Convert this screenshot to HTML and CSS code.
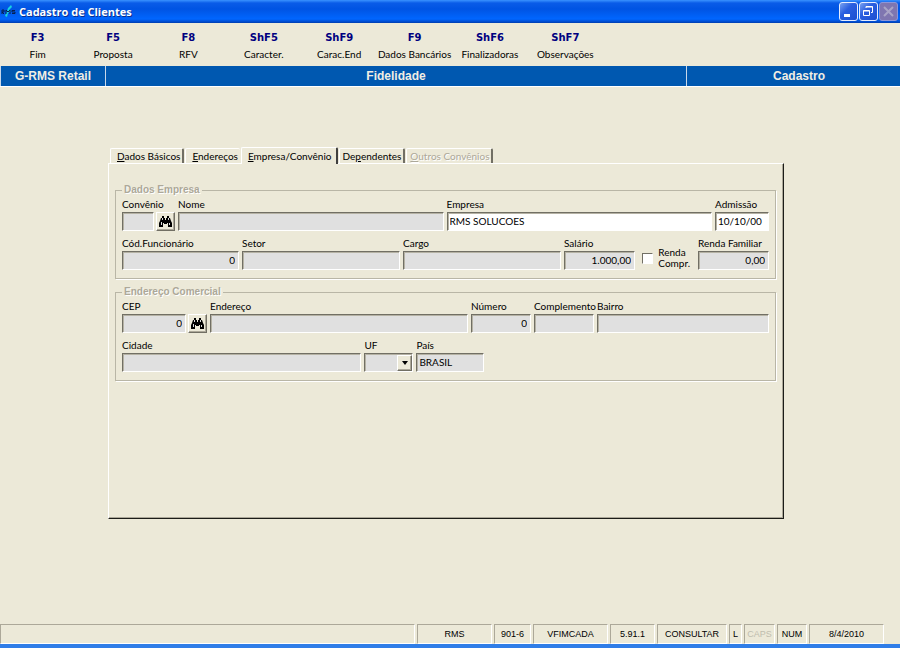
FILE: index.html
```html
<!DOCTYPE html>
<html lang="pt-BR">
<head>
    <meta charset="utf-8">
    <title>Cadastro de Clientes</title>
    <link rel="stylesheet" href="styles.css">
</head>
<body>
    <header class="titlebar">
        <svg class="app-icon" width="16" height="16" viewBox="0 0 16 16">
            <path d="M4 12 L6 7 L7 4 L10 1 L11 3 L8 6 L10 7 L7 9 L6 13 Z" fill="#19d3e0"/>
            <path d="M1 10V6h2v2H1l2 2M5 10V6l2 2 2-2v4M14 6.500h-3v1.500h3v1.500h-3" fill="none" stroke="#062050"/>
        </svg>
        <h1>Cadastro de Clientes</h1>
        <div class="window-buttons">
            <button type="button" aria-label="Minimizar">
                <svg width="19" height="19" viewBox="0 0 19 19"><path d="M5 12h6v3H5z" fill="#fff"/></svg>
            </button>
            <button type="button" aria-label="Restaurar">
                <svg width="19" height="19" viewBox="0 0 19 19"><path d="M7 6V4.500h6.500v6H12M7 5h6.500M4.500 8.500h6v5h-6zM4.500 9h6" fill="none" stroke="#fff"/></svg>
            </button>
            <button type="button" aria-label="Fechar" disabled>
                <svg width="19" height="19" viewBox="0 0 19 19"><path d="M5 5l9 9M14 5l-9 9" stroke="#a9a4c6" stroke-width="2"/></svg>
            </button>
        </div>
    </header>

    <nav class="toolbar">
        <button type="button"><b>F3</b>Fim</button>
        <button type="button"><b>F5</b>Proposta</button>
        <button type="button"><b>F8</b>RFV</button>
        <button type="button"><b>ShF5</b>Caracter.</button>
        <button type="button"><b>ShF9</b>Carac.End</button>
        <button type="button"><b>F9</b>Dados Bancários</button>
        <button type="button"><b>ShF6</b>Finalizadoras</button>
        <button type="button"><b>ShF7</b>Observações</button>
    </nav>

    <div class="banner">
        <span>G-RMS Retail</span>
        <span>Fidelidade</span>
        <span>Cadastro</span>
    </div>

    <main>
        <div class="tabs" role="tablist">
            <button type="button" role="tab"><u>D</u>ados Básicos</button>
            <button type="button" role="tab" class="before-active"><u>E</u>ndereços</button>
            <button type="button" role="tab" class="active" aria-selected="true"><u>E</u>mpresa/Convênio</button>
            <button type="button" role="tab">De<u>p</u>endentes</button>
            <button type="button" role="tab" disabled><u>O</u>utros Convênios</button>
        </div>

        <form class="panel">
            <fieldset>
                <legend>Dados Empresa</legend>
                <div class="row row-convenio">
                    <div class="field">
                        <label for="convenio">Convênio</label>
                        <div class="lookup">
                            <input id="convenio" type="text" readonly>
                            <button type="button" aria-label="Buscar convênio">
                                <svg width="15" height="15" viewBox="0 0 15 15"><path d="M4 2h2v2h1v2h1V4h1V2h2v2h1l1 3 1 2v4h-4V9H9v1H6V9H5v4H1V9l1-2 1-3h1z" fill="#000"/><path d="M4.500 4v2M3.500 8v3M10.500 4v2M11.500 9v2" stroke="#ddd"/></svg>
                            </button>
                        </div>
                    </div>
                    <div class="field">
                        <label for="nome">Nome</label>
                        <input id="nome" type="text" readonly>
                    </div>
                    <div class="field">
                        <label for="empresa">Empresa</label>
                        <input id="empresa" type="text" value="RMS SOLUCOES">
                    </div>
                    <div class="field">
                        <label for="admissao">Admissão</label>
                        <input id="admissao" type="text" value="10/10/00">
                    </div>
                </div>
                <div class="row row-funcionario">
                    <div class="field">
                        <label for="funcionario">Cód.Funcionário</label>
                        <input id="funcionario" class="number" type="text" value="0" readonly>
                    </div>
                    <div class="field">
                        <label for="setor">Setor</label>
                        <input id="setor" type="text" readonly>
                    </div>
                    <div class="field">
                        <label for="cargo">Cargo</label>
                        <input id="cargo" type="text" readonly>
                    </div>
                    <div class="field">
                        <label for="salario">Salário</label>
                        <input id="salario" class="number" type="text" value="1.000,00" readonly>
                    </div>
                    <div class="check">
                        <input id="renda" type="checkbox">
                        <label for="renda">Renda<br>Compr.</label>
                    </div>
                    <div class="field">
                        <label for="familiar">Renda Familiar</label>
                        <input id="familiar" class="number" type="text" value="0,00" readonly>
                    </div>
                </div>
            </fieldset>

            <fieldset>
                <legend>Endereço Comercial</legend>
                <div class="row row-cep">
                    <div class="field">
                        <label for="cep">CEP</label>
                        <div class="lookup">
                            <input id="cep" class="number" type="text" value="0" readonly>
                            <button type="button" aria-label="Buscar CEP">
                                <svg width="15" height="15" viewBox="0 0 15 15"><path d="M4 2h2v2h1v2h1V4h1V2h2v2h1l1 3 1 2v4h-4V9H9v1H6V9H5v4H1V9l1-2 1-3h1z" fill="#000"/><path d="M4.500 4v2M3.500 8v3M10.500 4v2M11.500 9v2" stroke="#ddd"/></svg>
                            </button>
                        </div>
                    </div>
                    <div class="field">
                        <label for="endereco">Endereço</label>
                        <input id="endereco" type="text" readonly>
                    </div>
                    <div class="field">
                        <label for="numero">Número</label>
                        <input id="numero" class="number" type="text" value="0" readonly>
                    </div>
                    <div class="field">
                        <label for="complemento">Complemento</label>
                        <input id="complemento" type="text" readonly>
                    </div>
                    <div class="field">
                        <label for="bairro">Bairro</label>
                        <input id="bairro" type="text" readonly>
                    </div>
                </div>
                <div class="row row-cidade">
                    <div class="field">
                        <label for="cidade">Cidade</label>
                        <input id="cidade" type="text" readonly>
                    </div>
                    <div class="field">
                        <label for="uf">UF</label>
                        <div class="combo">
                            <select id="uf"><option></option></select>
                            <span class="arrow"></span>
                        </div>
                    </div>
                    <div class="field">
                        <label for="pais">País</label>
                        <input id="pais" type="text" value="BRASIL" readonly>
                    </div>
                </div>
            </fieldset>
        </form>
    </main>

    <footer class="statusbar">
        <span></span>
        <span>RMS</span>
        <span>901-6</span>
        <span>VFIMCADA</span>
        <span>5.91.1</span>
        <span>CONSULTAR</span>
        <span>L</span>
        <span class="off">CAPS</span>
        <span>NUM</span>
        <span>8/4/2010</span>
    </footer>
</body>
</html>
```
FILE: styles.css
```css
:root {
    --face: #ece9d8;
    --shadow: #aca899;
    --dark: #716f64;
    --light: #fff;
    --readonly: #e0e0e0;
    --blue: #0058b0;
    --font-ui: Lato, Roboto, sans-serif;
    --font-title: "Open Sans", "Noto Sans", sans-serif;
}

* { box-sizing: border-box; margin: 0; padding: 0; }

body {
    min-height: 100vh;
    display: flex;
    flex-direction: column;
    background: var(--face);
    color: #000;
    font-family: var(--font-ui);
    font-size: 10px;
}

button, input, select {
    font: inherit;
    color: inherit;
    border-radius: 0;
}

button {
    background: none;
    border: none;
}

/* title bar */
.titlebar {
    display: flex;
    align-items: center;
    gap: 2px;
    height: 23px;
    padding: 0 2px 0 1px;
    background: linear-gradient(#3a93ff 0, #0a5ce8 3px, #0054e3 9px, #0066ff 19px, #0048c8 22px, #003dab 23px);
}

.titlebar h1 {
    flex: 1;
    color: #fff;
    font-family: var(--font-title);
    font-size: 11px;
    text-shadow: 1px 1px #0a2f8c;
}

.window-buttons {
    display: flex;
    gap: 1px;
}

.window-buttons button {
    display: flex;
    width: 19px;
    height: 19px;
    border: 1px solid #e4ecff;
    border-radius: 3px;
    background: linear-gradient(135deg, #7aa2f0, #2a5fe0 40%, #1c4fd0);
}

.window-buttons button svg {
    margin: -1px;
}

.window-buttons button:disabled {
    border-color: #8d96d8;
    background: #7f76b0;
}

/* toolbar */
.toolbar {
    display: grid;
    grid-template-columns: repeat(8, 1fr);
    width: 67%;
    height: 43px;
    padding-top: 6px;
}

.toolbar button {
    display: flex;
    flex-direction: column;
    align-items: center;
    min-width: 0;
    line-height: 17px;
    white-space: nowrap;
}

.toolbar b {
    color: #000080;
    font-family: "DejaVu Sans", sans-serif;
}

.banner {
    display: flex;
    height: 21px;
    border-bottom: 1px solid #fff;
    background: var(--blue);
    color: #f0eee4;
    font: bold 12px/21px "Liberation Sans", sans-serif;
    text-align: center;
}

.banner span { border-left: 1px solid #c8d8ea; }
.banner span:nth-child(1) { width: 105px; }
.banner span:nth-child(2) { flex: 1; }
.banner span:nth-child(3) {
    width: 214px;
    padding-left: 11px;
}

/* tabs and panel */
main {
    flex: 1;
    padding: 60px 116px 20px 108px;
}

.tabs {
    display: flex;
    align-items: flex-end;
    gap: 1px;
    padding-left: 2px;
}

.tabs button {
    height: 15px;
    padding: 0 2px 0 6px;
    border: 1px solid var(--light);
    border-right: 2px solid var(--dark);
    border-bottom: none;
    border-radius: 2px 2px 0 0;
    line-height: 15px;
    white-space: nowrap;
}

.tabs .active ~ button { padding: 0 2px 0 3px; }

.tabs button:disabled {
    color: var(--shadow);
    text-shadow: 1px 1px #fff;
}

.tabs .before-active { border-right: none; }

.tabs .active {
    height: 17px;
    margin-bottom: -1px;
    padding-right: 4px;
    background: var(--face);
    border-right-color: #404040;
}

.panel {
    display: flex;
    flex-direction: column;
    gap: 7px;
    min-height: 356px;
    padding: 20px 7px 7px 6px;
    border: 1px solid var(--light);
    border-right-color: #1c1c18;
    border-bottom-color: #1c1c18;
    box-shadow: inset -1px -1px var(--shadow);
}

fieldset {
    min-width: 0;
    padding: 2px 6px 8px;
    border: 1px solid #b9b6a6;
    box-shadow: 1px 1px var(--light);
}

legend {
    padding: 0 2px;
    color: var(--shadow);
    font: bold 10px/12px "Liberation Sans", sans-serif;
    text-shadow: 1px 1px #fff;
}

/* fields */
.row {
    display: grid;
    gap: 3px;
}

.row + .row { margin-top: 6px; }

.row-convenio { grid-template-columns: 53px 1fr 1fr 54px; }
.row-funcionario { grid-template-columns: 117px 1fr 1fr 71px 57px 71px; }
.row-cep { grid-template-columns: 85px 3fr 60px 60px 2fr; }
.row-cidade { grid-template-columns: 37% 49px 68px; }

.field {
    display: flex;
    flex-direction: column;
    min-width: 0;
}

.field label {
    padding-bottom: 2px;
    line-height: 12px;
    white-space: nowrap;
}

.field input, .combo select {
    width: 100%;
    min-width: 0;
    height: 19px;
    padding: 0 3px 1px 2px;
    background: #fff;
    border: 1px solid var(--light);
    border-top-color: var(--dark);
    border-left-color: var(--dark);
    box-shadow: inset 1px 1px #b5b2a4;
    outline: none;
}

.field input:read-only, .combo select {
    background: var(--readonly);
}

.field .number { text-align: right; }

.lookup {
    display: flex;
    gap: 2px;
}

.lookup button {
    display: flex;
    align-items: center;
    justify-content: center;
    width: 19px;
    height: 19px;
    flex-shrink: 0;
    border: 1px solid var(--light);
    border-right-color: var(--dark);
    border-bottom-color: var(--dark);
    box-shadow: inset -1px -1px var(--shadow);
}

.combo { position: relative; }
.combo select { appearance: none; }

.arrow {
    position: absolute;
    top: 2px;
    right: 1px;
    width: 15px;
    height: 16px;
    display: flex;
    align-items: center;
    justify-content: center;
    background: var(--face);
    border: 1px solid var(--light);
    border-right-color: var(--dark);
    border-bottom-color: var(--dark);
    box-shadow: inset -1px -1px var(--shadow);
    pointer-events: none;
}

.arrow::after {
    content: "";
    border: 3px solid transparent;
    border-top: 4px solid #000;
    border-bottom: none;
}

.check {
    display: flex;
    align-items: center;
    justify-content: flex-end;
    gap: 5px;
    padding: 9px 5px 0 0;
}

.check input {
    appearance: none;
    width: 11px;
    height: 11px;
    background: #fff;
    border: 1px solid #fff;
    border-top-color: var(--dark);
    border-left-color: var(--dark);
}

.check label { line-height: 11px; }

/* status bar */
.statusbar {
    display: flex;
    gap: 2px;
    height: 24px;
    padding-right: 16px;
    border-bottom: 4px solid #2f7de8;
    font-family: "Liberation Sans", sans-serif;
    font-size: 9px;
}

.statusbar span {
    width: 75px;
    height: 20px;
    border: 1px solid var(--light);
    border-top-color: var(--shadow);
    border-left-color: var(--shadow);
    line-height: 19px;
    text-align: center;
}

.statusbar span:nth-child(1) { flex: 1; }
.statusbar span:nth-child(3) { width: 37px; }
.statusbar span:nth-child(5) { width: 45px; }
.statusbar span:nth-child(6) { width: 70px; }
.statusbar span:nth-child(7) { width: 13px; }
.statusbar span:nth-child(8) { width: 31px; }
.statusbar span:nth-child(9) { width: 30px; }
.statusbar .off { color: #c0bdae; }
```
